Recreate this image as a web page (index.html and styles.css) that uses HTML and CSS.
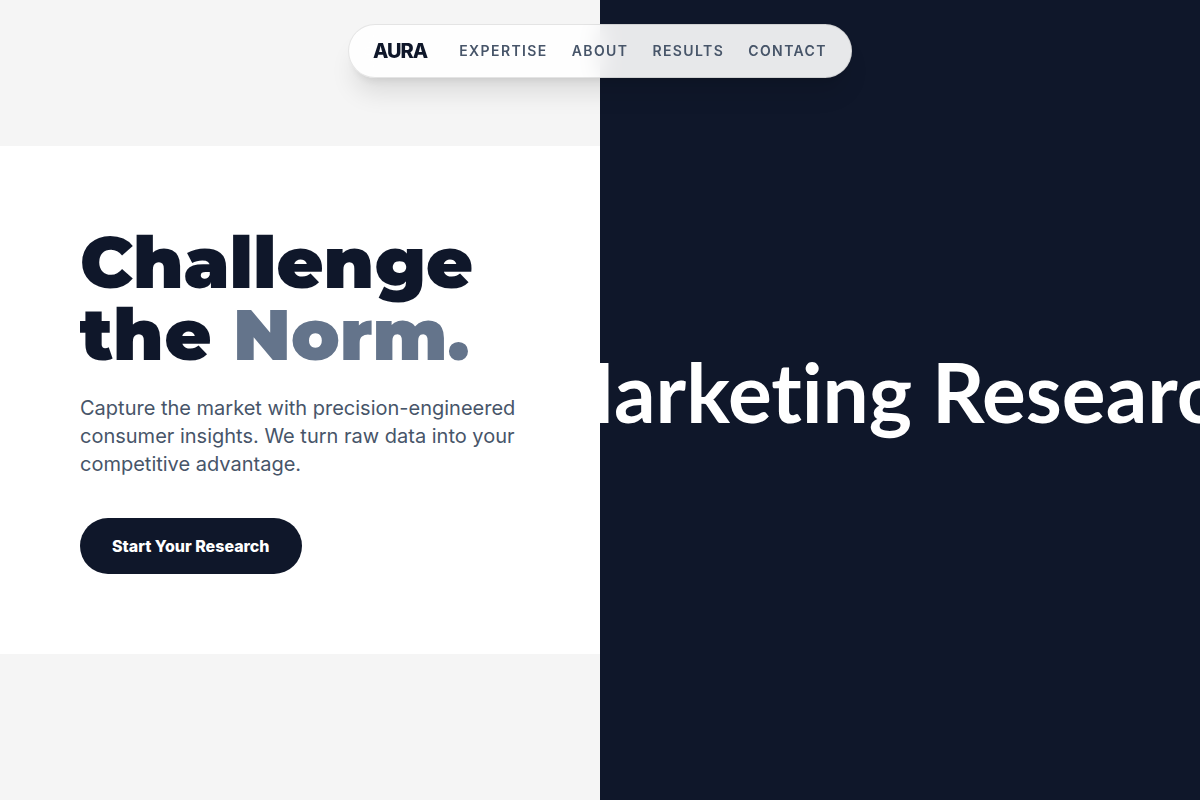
FILE: index.html
```html
<!DOCTYPE html>
<html lang="en">

<head>
    <meta charset="UTF-8">
    <meta name="viewport" content="width=device-width, initial-scale=1.0">
    <title>AURA | Marketing Research</title>
    <link rel="stylesheet" href="styles.css">
</head>

<body>
    <!-- Floating navigation -->
    <nav class="navbar">
        <a href="#" class="logo">AURA</a>
        <a href="#expertise" class="nav-link">Expertise</a>
        <a href="#about" class="nav-link">About</a>
        <a href="#results" class="nav-link">Results</a>
        <a href="#contact" class="nav-link">Contact</a>
    </nav>

    <!-- Split hero -->
    <main class="hero">
        <section class="hero-left">
            <div class="hero-content">
                <h1>Challenge<br>the <span>Norm.</span></h1>
                <p>Capture the market with precision-engineered consumer insights. We turn raw data into your competitive advantage.</p>
                <button type="button" class="cta-btn">Start Your Research</button>
            </div>
        </section>
        <section class="hero-right">
            <div class="hero-banner">Marketing Research</div>
        </section>
    </main>
</body>

</html>
```
FILE: styles.css
```css
* {
    box-sizing: border-box;
    margin: 0;
    padding: 0;
}

body {
    font-family: 'Inter', sans-serif;
    background: #f5f5f5;
    color: #0f172a;
    overflow-x: hidden;
}

/* Navigation */
.navbar {
    position: fixed;
    top: 24px;
    left: 50%;
    transform: translateX(-50%);
    z-index: 10;
    display: flex;
    align-items: center;
    gap: 24px;
    padding: 12px 24px;
    border: 1px solid rgba(0, 0, 0, 0.1);
    border-radius: 999px;
    background: rgba(255, 255, 255, 0.9);
    backdrop-filter: blur(12px);
    box-shadow: 0 20px 25px -5px rgba(0, 0, 0, 0.1), 0 8px 10px -6px rgba(0, 0, 0, 0.1);
}

.logo {
    margin-right: 8px;
    font-size: 20px;
    line-height: 28px;
    font-weight: 800;
    letter-spacing: -1px;
    color: #0f172a;
    text-decoration: none;
}

.nav-link {
    font-size: 14px;
    line-height: 20px;
    font-weight: 600;
    letter-spacing: 0.1em;
    text-transform: uppercase;
    color: #475569;
    text-decoration: none;
}

/* Hero */
.hero {
    display: grid;
    grid-template-columns: 1fr 1fr;
    min-height: 100vh;
}

.hero-left {
    display: flex;
    align-items: center;
}

.hero-content {
    width: 100%;
    padding: 80px;
    background: #ffffff;
}

.hero-content h1 {
    margin-bottom: 24px;
    font-family: 'Montserrat', 'Inter', sans-serif;
    font-size: 72px;
    line-height: 72px;
    font-weight: 900;
}

.hero-content h1 span {
    color: #64748b;
}

.hero-content p {
    max-width: 448px;
    margin-bottom: 40px;
    font-size: 20px;
    line-height: 28px;
    color: #475569;
}

.cta-btn {
    padding: 16px 32px;
    border: none;
    border-radius: 999px;
    background: #0f172a;
    color: #ffffff;
    font-family: inherit;
    font-size: 16px;
    line-height: 24px;
    font-weight: 800;
    cursor: pointer;
}

.hero-right {
    display: flex;
    align-items: center;
    justify-content: center;
    min-width: 0;
    padding-bottom: 18px;
    overflow: hidden;
    background: #0f172a;
}

.hero-banner {
    font-family: 'Lato', sans-serif;
    font-size: 82px;
    font-weight: 700;
    font-variant-ligatures: none;
    color: #ffffff;
    white-space: nowrap;
}
```
